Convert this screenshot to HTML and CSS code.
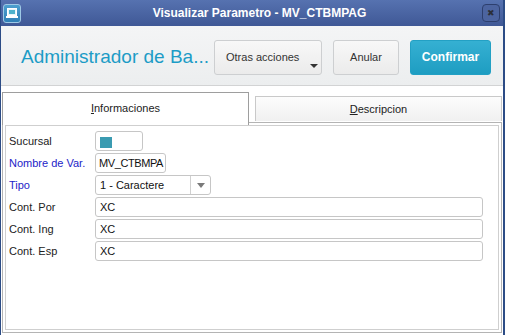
FILE: index.html
```html
<!DOCTYPE html>
<html lang="es">
<head>
  <meta charset="UTF-8">
  <title>Visualizar Parametro - MV_CTBMPAG</title>
  <link rel="stylesheet" href="styles.css">
</head>
<body>
  <div class="window">
    <div class="titlebar">
      <span class="app-icon">
        <svg width="12" height="10" viewBox="0 0 12 10">
          <rect x="1.5" y="0.5" width="9" height="7" fill="#e8f6fb" stroke="#ffffff"/>
          <rect x="3" y="2" width="6" height="4" fill="#4fb2cc"/>
          <rect x="0" y="8" width="12" height="2" fill="#ffffff"/>
        </svg>
      </span>
      <span class="title">Visualizar Parametro - MV_CTBMPAG</span>
      <span class="close">&#x2716;</span>
    </div>
    <div class="header">
      <h1>Administrador de Ba...</h1>
      <div class="actions">
        <button class="btn btn-more">Otras acciones<span class="caret"></span></button>
        <button class="btn btn-cancel">Anular</button>
        <button class="btn btn-primary">Confirmar</button>
      </div>
    </div>
    <div class="tabs">
      <div class="tab active"><u>I</u>nformaciones</div>
      <div class="tab"><u>D</u>escripcion</div>
    </div>
    <div class="panel">
      <div class="panel-inner">
        <div class="form">
          <label>Sucursal</label>
          <div class="field switch"><span class="knob"></span></div>
          <label class="req">Nombre de Var.</label>
          <div class="field short">MV_CTBMPA</div>
          <label class="req">Tipo</label>
          <div class="field select"><span class="value">1 - Caractere</span><span class="arrow"></span></div>
          <label>Cont. Por</label>
          <div class="field wide">XC</div>
          <label>Cont. Ing</label>
          <div class="field wide">XC</div>
          <label>Cont. Esp</label>
          <div class="field wide">XC</div>
        </div>
      </div>
    </div>
  </div>
</body>
</html>
```
FILE: styles.css
```css
html, body {
  margin: 0;
  padding: 0;
}
body {
  width: 505px;
  height: 335px;
  overflow: hidden;
  font-family: "Liberation Sans", Arial, sans-serif;
  font-size: 11px;
  color: #222;
  background: #2c4c86;
}
.window {
  width: 502px;
  height: 335px;
  margin-left: 1px;
  background: #fff;
  display: flex;
  flex-direction: column;
}
.titlebar {
  height: 26px;
  flex: none;
  background: linear-gradient(#5672b0, #3f5896);
  display: flex;
  align-items: center;
}
.app-icon {
  width: 16px;
  height: 17px;
  margin-left: 2px;
  border: 1px solid #9ec9e6;
  border-radius: 3px;
  background: linear-gradient(#4d9fcf, #2f7fb6);
  display: flex;
  align-items: center;
  justify-content: center;
}
.title {
  flex: 1;
  text-align: center;
  color: #fff;
  font-weight: bold;
  font-size: 12px;
  padding-left: 16px;
}
.close {
  width: 16px;
  height: 16px;
  margin-right: 3px;
  border: 1px solid #2d3f6e;
  border-radius: 4px;
  background: #4c64a0;
  color: #2b2f3a;
  font-size: 9px;
  line-height: 16px;
  text-align: center;
}
.header {
  height: 59px;
  flex: none;
  background: linear-gradient(#f4f5f6, #eceeef);
  border-bottom: 1px solid #d2d3d4;
  display: flex;
  align-items: center;
  justify-content: space-between;
}
.header h1 {
  margin: 0 0 0 20px;
  font-size: 19px;
  font-weight: normal;
  color: #1c9cc6;
  padding-top: 3px;
}
.actions {
  display: flex;
  gap: 11px;
  margin-right: 12px;
  padding-top: 3px;
}
.btn {
  height: 35px;
  font-family: inherit;
  font-size: 11px;
  color: #333;
  border: 1px solid #cdcfd1;
  border-radius: 3px;
  background: linear-gradient(#f8f8f8, #ebebeb);
  padding: 0;
}
.btn-more {
  width: 108px;
  position: relative;
  text-align: left;
  padding-left: 11px;
}
.caret {
  position: absolute;
  right: 3px;
  bottom: 6px;
  border-left: 4px solid transparent;
  border-right: 4px solid transparent;
  border-top: 4px solid #333;
}
.btn-cancel {
  width: 66px;
}
.btn-primary {
  width: 81px;
  border-color: #23a0c4;
  background: linear-gradient(#35b0d2, #1e9dc2);
  color: #fff;
  font-weight: bold;
  font-size: 12px;
}
.tabs {
  height: 36px;
  flex: none;
  display: flex;
  align-items: flex-end;
  padding-left: 1px;
  gap: 6px;
}
.tab {
  width: 245px;
  height: 24px;
  line-height: 25px;
  text-align: center;
  border: 1px solid #c9c9c9;
  border-bottom: none;
  background: linear-gradient(#fcfcfc, #f0f0f0);
  color: #222;
  margin-bottom: 1px;
}
.tab.active {
  height: 32px;
  line-height: 31px;
  border-color: #9e9e9e;
  background: #fff;
  margin-bottom: -3px;
  position: relative;
  z-index: 1;
}
.panel {
  flex: 1;
  margin: 0 1px 2px 1px;
  border: 1px solid #b4b4b4;
  padding: 2px;
  display: flex;
}
.panel-inner {
  flex: 1;
  border: 1px solid #cfcfcf;
  padding: 5px 0 0 3px;
}
.form {
  display: grid;
  grid-template-columns: 86px auto;
  row-gap: 2px;
  align-items: center;
}
.form label {
  color: #222;
}
.form label.req {
  color: #2323c8;
}
.field {
  height: 18px;
  line-height: 19px;
  border: 1px solid #c6c6c6;
  border-radius: 3px;
  padding-left: 4px;
  background: #fff;
  box-sizing: content-box;
  color: #111;
  white-space: nowrap;
  overflow: hidden;
}
.switch {
  width: 46px;
  padding: 0;
  position: relative;
}
.knob {
  position: absolute;
  left: 4px;
  top: 5px;
  width: 12px;
  height: 11px;
  background: #3a9bb1;
}
.short {
  width: 66px;
  padding-left: 3px;
  letter-spacing: -0.4px;
}
.select {
  width: 110px;
  display: flex;
}
.select .value {
  flex: 1;
}
.select .arrow {
  width: 19px;
  border-left: 1px solid #d0d0d0;
  position: relative;
}
.select .arrow::after {
  content: "";
  position: absolute;
  left: 6px;
  top: 7px;
  border-left: 4px solid transparent;
  border-right: 4px solid transparent;
  border-top: 5px solid #7a7a7a;
}
.wide {
  width: 382px;
}
```
